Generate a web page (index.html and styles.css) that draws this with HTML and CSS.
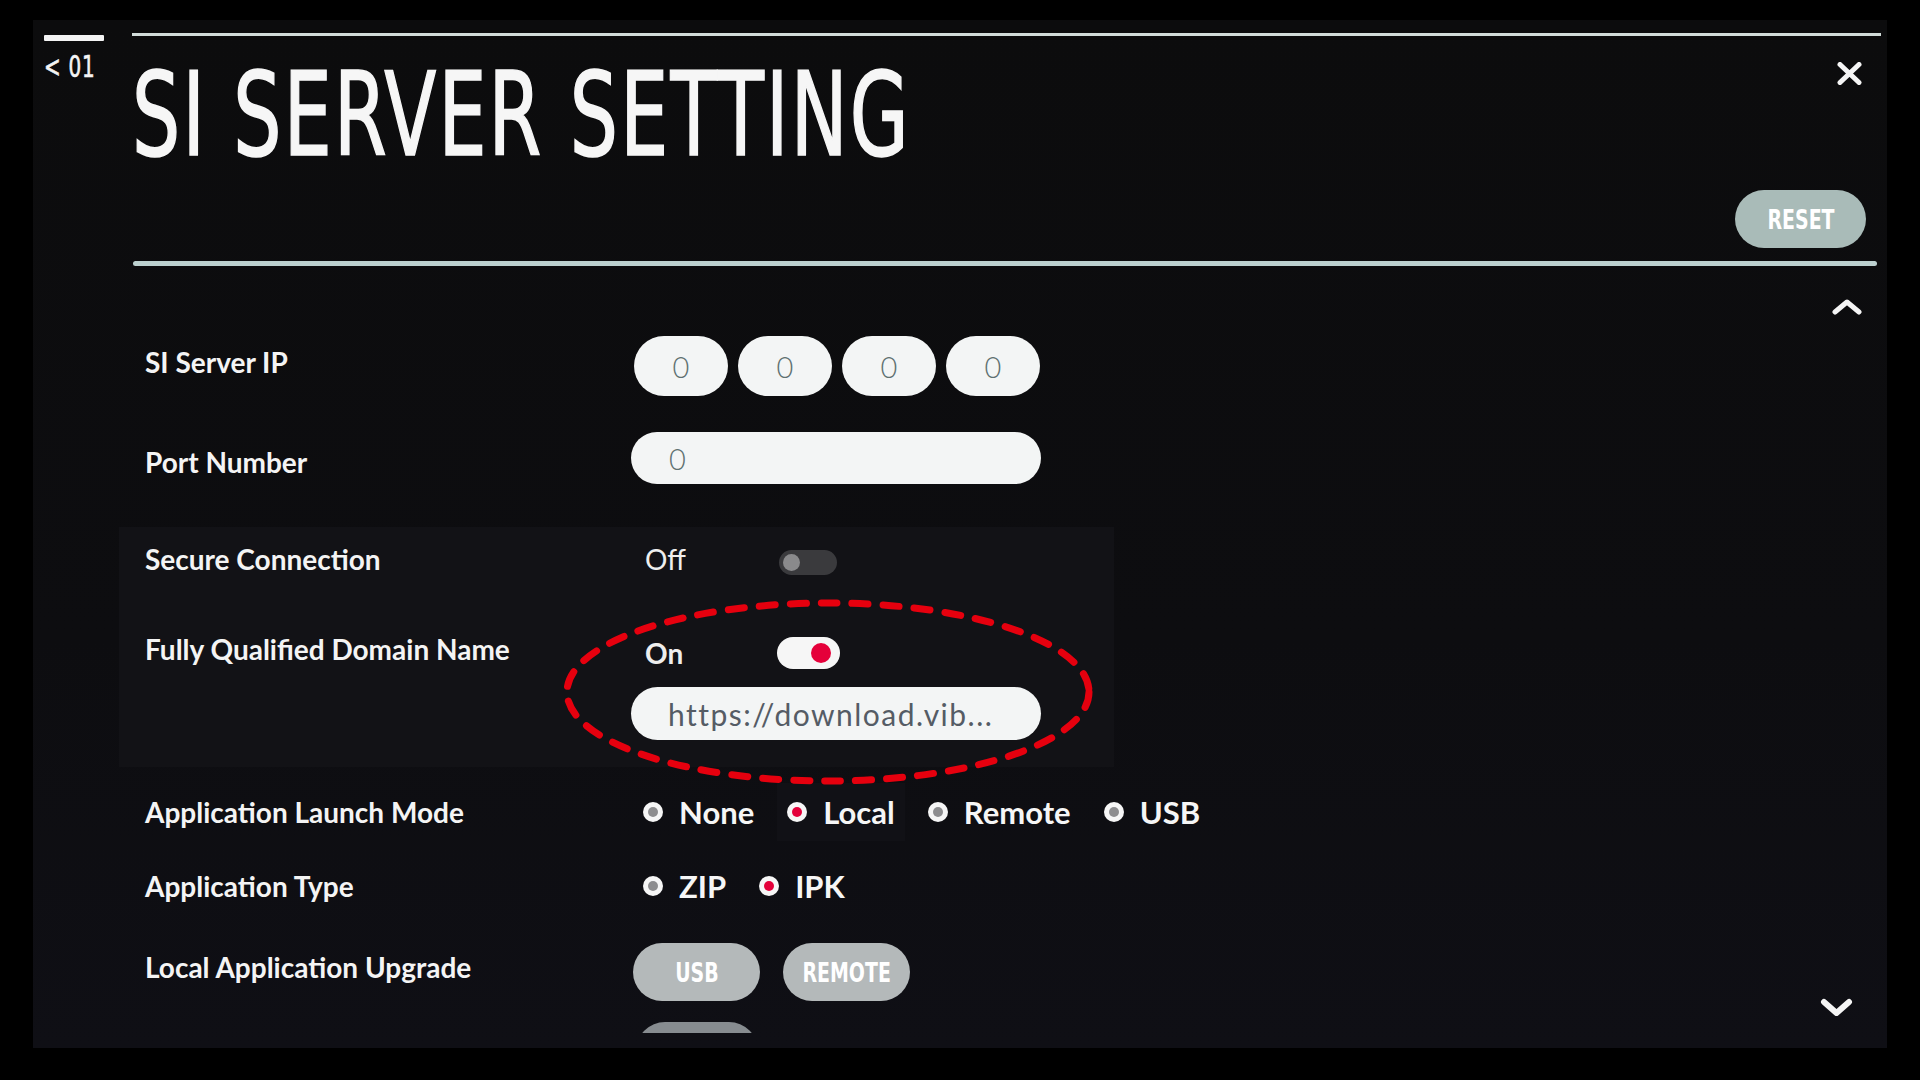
FILE: index.html
```html
<!DOCTYPE html>
<html lang="en">
<head>
<meta charset="utf-8">
<title>SI Server Setting</title>
<link rel="stylesheet" href="styles.css">
</head>
<body>
<div class="screen">
  <aside class="nav">
    <div class="nav-bar"></div>
    <div class="nav-page"><span class="cond">&lt; 01</span></div>
  </aside>
  <main class="main">
    <header class="header">
      <div class="title-row">
        <h1 class="title"><span class="title-text">SI SERVER SETTING</span></h1>
        <button class="close" aria-label="Close">
          <svg width="25" height="23" viewBox="0 0 25 23"><path d="M3 2.5 L22 20.5 M22 2.5 L3 20.5" stroke="#f5f5f5" stroke-width="5" stroke-linecap="round" fill="none"/></svg>
        </button>
      </div>
      <div class="reset-row">
        <button class="pill reset"><span class="cond">RESET</span></button>
      </div>
    </header>
    <div class="divider"></div>
    <div class="body">
      <div class="list">
        <div class="row ip-row">
          <div class="label">SI Server IP</div>
          <div class="ip-boxes">
            <div class="ip-box">0</div>
            <div class="ip-box">0</div>
            <div class="ip-box">0</div>
            <div class="ip-box">0</div>
          </div>
        </div>
        <div class="row port-row">
          <div class="label">Port Number</div>
          <div class="field">0</div>
        </div>
        <div class="group">
          <div class="row secure-row">
            <div class="label">Secure Connection</div>
            <div class="ctrl">
              <span class="state">Off</span>
              <span class="toggle off"><span class="knob"></span></span>
            </div>
          </div>
          <div class="row fqdn-row">
            <div class="label">Fully Qualified Domain Name</div>
            <div class="fqdn-ctrl">
              <div class="ctrl">
                <span class="state on-text">On</span>
                <span class="toggle on"><span class="knob"></span></span>
              </div>
              <div class="field url">https://download.vib...</div>
            </div>
          </div>
        </div>
        <div class="row launch-row">
          <div class="label">Application Launch Mode</div>
          <div class="options">
            <div class="opt"><span class="radio"></span>None</div>
            <div class="opt focus"><span class="radio sel"></span>Local</div>
            <div class="opt"><span class="radio"></span>Remote</div>
            <div class="opt"><span class="radio"></span>USB</div>
          </div>
        </div>
        <div class="row type-row">
          <div class="label">Application Type</div>
          <div class="options">
            <div class="opt"><span class="radio"></span>ZIP</div>
            <div class="opt"><span class="radio sel"></span>IPK</div>
          </div>
        </div>
        <div class="row upgrade-row">
          <div class="label">Local Application Upgrade</div>
          <div class="buttons">
            <button class="pill btn"><span class="cond">USB</span></button>
            <button class="pill btn"><span class="cond">REMOTE</span></button>
          </div>
        </div>
        <div class="row next-row">
          <div class="label"></div>
          <div class="pill btn partial"></div>
        </div>
      </div>
      <div class="scroll">
        <svg class="chev-up" width="30" height="17" viewBox="0 0 30 17"><path d="M3 14 L15 4 L27 14" stroke="#f5f5f5" stroke-width="5" stroke-linecap="round" stroke-linejoin="round" fill="none"/></svg>
        <svg class="chev-down" width="33" height="20" viewBox="0 0 33 20"><path d="M4 4 L16.5 15 L29 4" stroke="#f5f5f5" stroke-width="6" stroke-linecap="round" stroke-linejoin="round" fill="none"/></svg>
      </div>
    </div>
  </main>
  <svg class="annotation" width="530" height="186" viewBox="0 0 530 186">
    <ellipse cx="265" cy="93" rx="261" ry="89" fill="none" stroke="#e6000e" stroke-width="7" stroke-dasharray="16 15" stroke-linecap="round"/>
  </svg>
</div>
</body>
</html>
```
FILE: styles.css
```css
* { box-sizing: border-box; }

html, body {
  margin: 0;
  background: #000;
}

body {
  width: 1920px;
  height: 1080px;
  overflow: hidden;
  font-family: Lato, "Open Sans", "DejaVu Sans", sans-serif;
  color: #f2f2f2;
}

.screen {
  position: relative;
  margin: 20px 0 0 33px;
  width: 1854px;
  height: 1028px;
  background: linear-gradient(180deg, #0c0c0d 0%, #0d0d10 60%, #0f0f15 100%);
  display: flex;
  overflow: hidden;
}

.cond {
  display: inline-block;
  font-family: "DejaVu Sans", sans-serif;
  font-stretch: condensed;
  transform: scaleX(0.78);
  transform-origin: center;
}

/* left nav */
.nav {
  width: 86px;
  flex: none;
  padding: 15px 0 0 11px;
}
.nav-bar {
  width: 60px;
  height: 6px;
  background: #f4f4f4;
  border-radius: 1px;
}
.nav-page {
  margin-top: 9px;
  font-size: 30px;
  line-height: 30px;
  color: #f4f4f4;
  white-space: nowrap;
}
.nav-page .cond {
  transform: scaleX(0.74);
  transform-origin: left center;
  letter-spacing: 1px;
  -webkit-text-stroke: 0.6px #f4f4f4;
}

/* main */
.main {
  flex: 1;
  min-width: 0;
  display: flex;
  flex-direction: column;
  padding: 13px 6px 0 0;
}

.header {
  margin-left: 13px;
  height: 228px;
  border-top: 3px solid #d2dcd9;
  display: flex;
  flex-direction: column;
}

.title-row {
  display: flex;
  justify-content: space-between;
  align-items: flex-start;
}

.title {
  margin: 21px 0 0 0;
  font-family: "DejaVu Sans", sans-serif;
  font-stretch: condensed;
  font-weight: 400;
  font-size: 116px;
  line-height: 1;
  color: #f6f6f6;
  white-space: nowrap;
}
.title-text {
  display: inline-block;
  transform: scaleX(0.728);
  transform-origin: left center;
  letter-spacing: 3px;
  -webkit-text-stroke: 1.6px #f6f6f6;
}

.close {
  margin: 26px 19px 0 0;
  padding: 0;
  border: 0;
  background: none;
  width: 25px;
  height: 23px;
  display: block;
}
.close svg { display: block; }

.reset-row {
  margin-top: auto;
  display: flex;
  justify-content: flex-end;
  padding: 0 15px 13px 0;
}

.pill {
  border: 0;
  padding: 0;
  display: flex;
  align-items: center;
  justify-content: center;
  color: #ffffff;
  font-weight: 700;
  font-size: 27px;
}
.pill .cond { font-weight: 700; }

.reset {
  width: 131px;
  height: 58px;
  border-radius: 29px;
  background: #a9bbb8;
}

.divider {
  height: 5px;
  margin: 0 4px 0 14px;
  background: #bcd0cf;
  border-radius: 3px;
}

/* body */
.body {
  flex: 1;
  min-height: 0;
  display: flex;
}

.list {
  width: 1100px;
  height: 767px;
  overflow: hidden;
  padding-top: 70px;
  display: flex;
  flex-direction: column;
}

.row {
  display: flex;
  align-items: center;
  padding-left: 26px;
  flex: none;
}

.label {
  width: 489px;
  flex: none;
  font-size: 28px;
  font-weight: 700;
  color: #f4f4f4;
  white-space: nowrap;
}

.ip-row { height: 60px; }
.ip-row .label { margin-top: -8px; }
.ip-boxes {
  display: flex;
  gap: 10px;
}
.ip-box {
  width: 94px;
  height: 60px;
  border-radius: 30px;
  background: #f3f5f5;
  display: flex;
  align-items: center;
  justify-content: center;
  color: #5f7171;
  font-size: 29px;
  font-weight: 300;
}

.port-row {
  margin-top: 36px;
  height: 52px;
}
.port-row .label { margin-top: 8px; }
.field {
  width: 410px;
  height: 52px;
  border-radius: 26px;
  background: #f3f5f5;
  display: flex;
  align-items: center;
  padding-left: 38px;
  margin-left: -3px;
  color: #5f7171;
  font-size: 29px;
  font-weight: 300;
}

.group {
  margin-top: 43px;
  width: 995px;
  background: #121216;
  padding: 7px 0 27px;
  flex: none;
}

.secure-row { height: 50px; }

.ctrl {
  display: flex;
  align-items: center;
  height: 50px;
}
.state {
  width: 145px;
  padding-left: 11px;
  font-size: 28px;
  font-weight: 400;
  color: #eeeeee;
}
.state.on-text {
  width: 143px;
  font-weight: 700;
}
.secure-row .toggle { margin-top: 6px; }

.toggle {
  position: relative;
  display: block;
  flex: none;
}
.toggle.off {
  width: 58px;
  height: 25px;
  border-radius: 13px;
  background: #3a3a3d;
}
.toggle.off .knob {
  position: absolute;
  left: 4px;
  top: 4px;
  width: 17px;
  height: 17px;
  border-radius: 50%;
  background: #8a8a8c;
}
.toggle.on {
  width: 63px;
  height: 32px;
  border-radius: 16px;
  background: #f6f6f6;
}
.toggle.on .knob {
  position: absolute;
  right: 9px;
  top: 6px;
  width: 20px;
  height: 20px;
  border-radius: 50%;
  background: #e5003a;
}

.fqdn-row {
  margin-top: 45px;
  align-items: flex-start;
}
.fqdn-row .label {
  line-height: 40px;
}
.fqdn-ctrl {
  display: flex;
  flex-direction: column;
  margin-top: -1px;
}
.field.url {
  margin-top: 9px;
  height: 53px;
  border-radius: 27px;
  color: #555c65;
  font-weight: 400;
  font-size: 30px;
  letter-spacing: 1.5px;
  padding-left: 37px;
}

.launch-row {
  margin-top: 25px;
  height: 40px;
}
.type-row {
  margin-top: 34px;
  height: 40px;
}
.options {
  display: flex;
  gap: 33px;
  padding-left: 9px;
}
.opt {
  display: flex;
  align-items: center;
  gap: 16px;
  font-size: 31px;
  font-weight: 700;
  color: #f6f6f6;
}
.opt.focus {
  background: #111116;
  box-shadow: 0 0 0 10px #111116;
}
.radio {
  width: 20px;
  height: 20px;
  border-radius: 50%;
  background: #f6f6f6;
  display: grid;
  place-items: center;
  flex: none;
}
.radio::after {
  content: "";
  width: 10px;
  height: 10px;
  border-radius: 50%;
  background: #8d8d8f;
}
.radio.sel::after {
  background: #e4003a;
}

.upgrade-row {
  margin-top: 37px;
  height: 58px;
}
.upgrade-row .label { margin-top: -10px; }
.buttons {
  display: flex;
  gap: 23px;
  margin-left: -1px;
}
.btn {
  width: 127px;
  height: 58px;
  border-radius: 29px;
  background: #b4b9ba;
}
.next-row {
  margin-top: 21px;
  height: 58px;
  align-items: flex-start;
}
.partial {
  background: #878c90;
  width: 122px;
  margin-left: 2px;
}

.scroll {
  flex: 1;
  display: flex;
  flex-direction: column;
  align-items: flex-end;
}
.chev-up {
  display: block;
  margin: 32px 19px 0 0;
}
.chev-down {
  display: block;
  margin: auto 28px 30px 0;
}

.annotation {
  position: absolute;
  left: 530px;
  top: 579px;
}
```
